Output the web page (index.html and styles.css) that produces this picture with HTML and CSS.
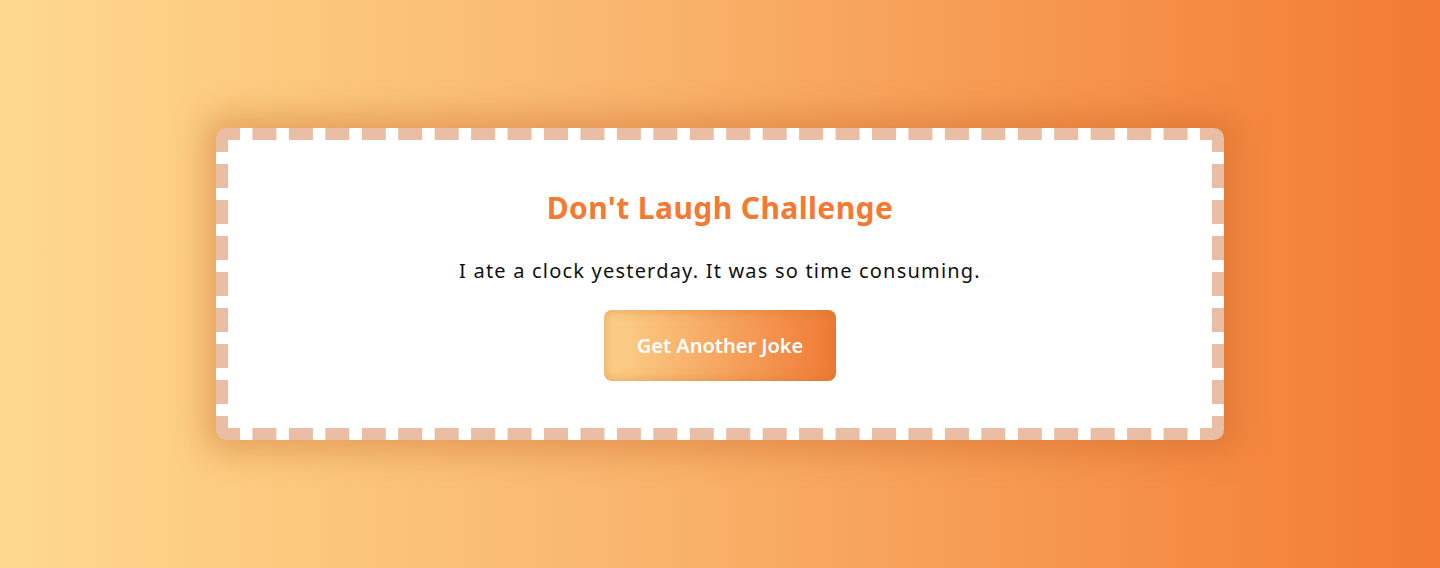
FILE: index.html
```html
<!DOCTYPE html>
<html>
<head>
<meta charset="utf-8">
<link rel="stylesheet" href="styles.css">
</head>
<body>
<main class="page">
  <section class="card">
    <h1 class="title">Don't Laugh Challenge</h1>
    <p class="joke">I ate a clock yesterday. It was so time consuming.</p>
    <button class="btn">Get Another Joke</button>
  </section>
</main>
</body>
</html>
```
FILE: styles.css
```css
* { box-sizing: border-box; }
html, body { margin: 0; height: 100%; }
body {
  font-family: "Noto Sans", sans-serif;
  background: linear-gradient(90deg, #fed98e 0%, #f9b46c 45%, #f37a32 100%);
}
.page {
  height: 568px;
  display: flex;
  align-items: center;
  justify-content: center;
}
.card {
  width: 1008px;
  height: 312px;
  background: #fff;
  border: 12px dashed #e9bea4;
  border-radius: 10px;
  box-shadow: 0 0 32px 12px rgba(190, 90, 30, 0.35);
  display: flex;
  flex-direction: column;
  align-items: center;
  padding-top: 48px;
}
.title {
  margin: 0;
  color: #f47a34;
  font-size: 30px;
  font-weight: 700;
  line-height: 40px;
  letter-spacing: 0.4px;
}
.joke {
  margin: 29px 0 0;
  font-size: 20px;
  line-height: 28px;
  letter-spacing: 1.2px;
  color: #111;
}
.btn {
  margin-top: 25px;
  width: 232px;
  height: 71px;
  border: none;
  border-radius: 8px;
  background: linear-gradient(90deg, #fdd28a 0%, #f6a660 50%, #f07a35 100%);
  box-shadow: inset 0 0 12px rgba(200, 110, 40, 0.45);
  color: #fff;
  font-family: inherit;
  font-size: 20px;
  font-weight: 600;
}
```
